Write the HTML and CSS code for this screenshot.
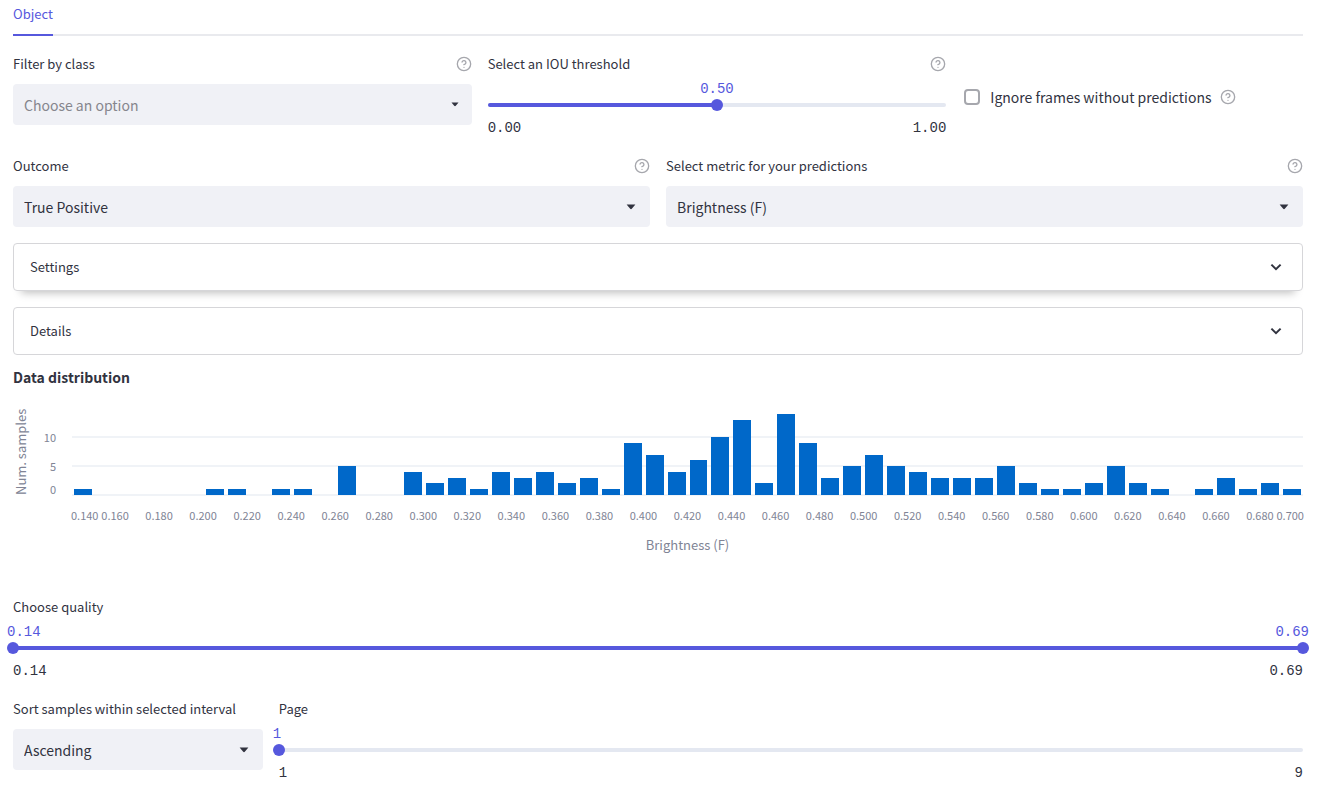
FILE: index.html
```
<!DOCTYPE html>
<html lang="en">
<head>
<meta charset="utf-8">
<meta name="viewport" content="width=device-width, initial-scale=1">
<title>Predictions explorer</title>
<link rel="stylesheet" href="styles.css">
</head>
<body>
<svg class="sprite" aria-hidden="true">
  <symbol id="help" viewBox="0 0 24 24"><circle cx="12" cy="12" r="10"/><path d="M9.09 9a3 3 0 0 1 5.83 1c0 2-3 3-3 3M12 17h.01"/></symbol>
  <symbol id="caret" viewBox="0 0 10 6"><path d="M.6.6h8.8L6 4.6Q5 5.8 4 4.6z"/></symbol>
  <symbol id="chevron" viewBox="0 0 12 8"><path d="M1.4 1.6 6 6.200l4.600-4.600"/></symbol>
</svg>
<main class="page">
  <nav class="tabs" role="tablist"><button class="tab" role="tab" aria-selected="true">Object</button></nav>

  <div class="row row-filters">
    <div class="field">
      <div class="field-head"><label for="classes">Filter by class</label><button class="help" aria-label="Help"><svg><use href="#help"/></svg></button></div>
      <div class="select"><select id="classes" class="placeholder"><option>Choose an option</option></select><svg class="caret caret-small"><use href="#caret"/></svg></div>
    </div>
    <div class="field">
      <div class="field-head"><label for="iou">Select an IOU threshold</label><button class="help" aria-label="Help"><svg><use href="#help"/></svg></button></div>
      <div class="values middle"><output>0.50</output></div>
      <div class="slider"><div class="rail"><div class="fill" style="width:50%"></div></div><input id="iou" type="range" min="0" max="1" step="0.01" value="0.5"></div>
      <div class="limits"><span>0.00</span><span>1.00</span></div>
    </div>
    <div class="check">
      <input type="checkbox" id="ignore"><label for="ignore">Ignore frames without predictions</label><button class="help" aria-label="Help"><svg><use href="#help"/></svg></button>
    </div>
  </div>

  <div class="row row-half">
    <div class="field">
      <div class="field-head"><label for="outcome">Outcome</label><button class="help" aria-label="Help"><svg><use href="#help"/></svg></button></div>
      <div class="select"><select id="outcome"><option>True Positive</option></select><svg class="caret"><use href="#caret"/></svg></div>
    </div>
    <div class="field">
      <div class="field-head"><label for="metric">Select metric for your predictions</label><button class="help" aria-label="Help"><svg><use href="#help"/></svg></button></div>
      <div class="select"><select id="metric"><option>Brightness (F)</option></select><svg class="caret"><use href="#caret"/></svg></div>
    </div>
  </div>

  <details class="expander raised"><summary>Settings<svg class="chevron"><use href="#chevron"/></svg></summary></details>
  <details class="expander"><summary>Details<svg class="chevron"><use href="#chevron"/></svg></summary></details>

  <section class="distribution">
    <h2>Data distribution</h2>
    <div class="chart">
      <div class="y-title">Num. samples</div>
      <div class="y-ticks"><span>10</span><span>5</span><span>0</span></div>
      <div class="plot">
        <div class="gridlines"><i></i><i></i><i></i></div>
        <div class="bars" id="bars"></div>
      </div>
      <div class="x-ticks" id="ticks"></div>
      <div class="x-title">Brightness (F)</div>
    </div>
  </section>

  <div class="field">
    <div class="field-head"><label for="quality-min">Choose quality</label></div>
    <div class="values"><output>0.14</output><output>0.69</output></div>
    <div class="slider double"><div class="rail"><div class="fill" style="width:100%"></div></div><input id="quality-min" type="range" min="0.14" max="0.69" step="0.01" value="0.14"><input aria-label="Maximum quality" type="range" min="0.14" max="0.69" step="0.01" value="0.69"></div>
    <div class="limits"><span>0.14</span><span>0.69</span></div>
  </div>

  <div class="row row-sort">
    <div class="field">
      <div class="field-head"><label for="sort">Sort samples within selected interval</label></div>
      <div class="select"><select id="sort"><option>Ascending</option></select><svg class="caret"><use href="#caret"/></svg></div>
    </div>
    <div class="field">
      <div class="field-head"><label for="page">Page</label></div>
      <div class="values"><output>1</output></div>
      <div class="slider"><div class="rail"></div><input id="page" type="range" min="1" max="9" value="1"></div>
      <div class="limits"><span>1</span><span>9</span></div>
    </div>
  </div>
</main>
<script src="chart.js"></script>
</body>
</html>
```
FILE: styles.css
```
* { box-sizing: border-box; }

:root {
  --ink: #31333f;
  --accent: #5658dd;
  --muted: #808495;
  --surface: #f0f1f6;
}

body {
  margin: 0;
  background: #fff;
  color: var(--ink);
  font: 13px/20px "Noto Sans CJK SC", "Noto Sans", sans-serif;
}

button, input, select { font: inherit; color: inherit; }
.sprite { display: none; }

.page {
  display: flex;
  flex-direction: column;
  gap: 16px;
  padding: 4px 19px 8px 13px;
}

.tabs {
  display: flex;
  height: 32px;
  margin-bottom: 2px;
  border-bottom: 2px solid #e9eaee;
}
.tab {
  height: 32px;
  padding: 0 0 10px;
  border: 0;
  border-bottom: 2px solid var(--accent);
  background: none;
  color: var(--accent);
}

.row { display: grid; gap: 16px; }
.row-filters { grid-template-columns: 35fr 35fr 26fr; }
.row-half { grid-template-columns: 1fr 1fr; }
.row-sort { grid-template-columns: 10fr 41fr; }

.field { min-width: 0; }
.field-head {
  display: flex;
  justify-content: space-between;
  align-items: center;
  height: 20px;
}

.help {
  display: flex;
  padding: 0;
  border: 0;
  background: none;
}
.help svg {
  width: 16px;
  height: 16px;
  fill: none;
  stroke: #a6a7ad;
  stroke-width: 2;
  stroke-linecap: round;
  stroke-linejoin: round;
}

.select {
  display: grid;
  align-items: center;
  margin-top: 10px;
}
.select > * { grid-area: 1 / 1; }
.select select {
  appearance: none;
  width: 100%;
  height: 41px;
  padding: 0 32px 0 11px;
  border: 0;
  border-radius: 4px;
  background: var(--surface);
  font-size: 14px;
}
.select .placeholder { color: #85868d; }
.caret {
  width: 10px;
  height: 6px;
  margin-right: 14px;
  justify-self: end;
  fill: var(--ink);
  pointer-events: none;
}
.caret-small { width: 8px; height: 5px; margin-right: 13px; }

.values, .limits {
  display: flex;
  justify-content: space-between;
  font: 14px/20px "Liberation Mono", monospace;
}
.values {
  margin: 6px -6px 0;
  color: var(--accent);
  line-height: 18px;
}
.values.middle { justify-content: center; }
.limits { padding: 7px 0 2px; }

.slider {
  display: grid;
  align-items: center;
  height: 13px;
}
.slider > * { grid-area: 1 / 1; }
.rail {
  height: 4px;
  border-radius: 2px;
  background: #e4e8f1;
}
.fill {
  height: 100%;
  border-radius: 2px;
  background: var(--accent);
}
.slider input {
  appearance: none;
  width: auto;
  height: 12px;
  margin: 0 -6px;
  background: none;
}
.slider input::-webkit-slider-thumb {
  appearance: none;
  width: 12px;
  height: 12px;
  border-radius: 50%;
  background: var(--accent);
  pointer-events: auto;
}
.double input { pointer-events: none; }

.check {
  display: flex;
  align-items: center;
  height: 20px;
  margin: 33px 0 0 2px;
  font-size: 14px;
}
.check input {
  appearance: none;
  width: 16px;
  height: 16px;
  margin: 0 10px 0 0;
  border: 2px solid #a6a7ad;
  border-radius: 4px;
}
.check .help { margin-left: 8px; }

.expander {
  border: 1px solid #d6d6d9;
  border-radius: 4px;
}
.raised { box-shadow: 0 10px 8px -8px rgba(0, 0, 0, .25); }
.expander summary {
  display: flex;
  justify-content: space-between;
  align-items: center;
  height: 46px;
  padding: 0 20px 0 16px;
  list-style: none;
  cursor: pointer;
}
.chevron {
  width: 12px;
  height: 8px;
  fill: none;
  stroke: var(--ink);
  stroke-width: 2;
}

.distribution { margin: -4px 0 26px; }
h2 {
  margin: 0 0 26px;
  font-size: 14px;
  line-height: 21px;
}

/* columns: axis title, tick labels, plot */
.chart {
  display: grid;
  grid-template-columns: 16px 27px 1fr;
  column-gap: 8px;
  color: var(--muted);
  font-size: 11px;
  line-height: 16px;
}
.y-title {
  justify-self: center;
  align-self: center;
  writing-mode: vertical-rl;
  transform: rotate(180deg);
  font-size: 13px;
  height: 81px;
  white-space: nowrap;
}
.y-ticks, .gridlines {
  display: grid;
  grid-template-rows: 4fr 5fr 5fr;
  height: 81px;
}
.y-ticks span {
  align-self: end;
  margin-bottom: -8px;
}
.y-ticks { text-align: right; padding-right: 8px; }
.y-ticks span:last-child { margin-bottom: -2px; }
.plot { display: grid; height: 81px; }
.plot > * { grid-area: 1 / 1; }
.gridlines i { border-bottom: 2px solid #f0f3f7; margin-bottom: -1px; }
.bars {
  display: grid;
  grid-template-columns: repeat(56, 1fr);
  align-items: end;
  z-index: 1;
}
.bars span {
  margin: 0 2px;
  background: #0068c9;
}
.x-ticks {
  grid-column: 3;
  display: grid;
  grid-template-columns: 1fr repeat(27, 2fr) 1fr;
  margin: 12px -1px 0;
}
.x-ticks span {
  display: flex;
  justify-content: center;
  min-width: 0;
}
.x-ticks span:first-child { justify-content: flex-start; }
.x-ticks span:last-child { justify-content: flex-end; }
.x-title {
  grid-column: 3;
  margin-top: 12px;
  text-align: center;
  font-size: 13px;
  line-height: 20px;
}
```
FILE: chart.js
```
// Sample counts per 0.01-wide brightness bin, starting at 0.14
const counts = [
  1, 0, 0, 0, 0, 0, 1, 1, 0, 1, 1, 0, 5, 0, 0, 4, 2, 3, 1, 4, 3, 4, 2, 3, 1, 9, 7, 4,
  6, 10, 13, 2, 14, 9, 3, 5, 7, 5, 4, 3, 3, 3, 5, 2, 1, 1, 2, 5, 2, 1, 0, 1, 3, 1, 2, 1
];
const bars = document.getElementById("bars");
for (const n of counts) {
  const bar = document.createElement("span");
  bar.style.height = (n / 14) * 100 + "%";
  bars.append(bar);
}
const ticks = document.getElementById("ticks");
for (let i = 0; i <= 28; i++) {
  const tick = document.createElement("span");
  tick.textContent = (0.14 + i * 0.02).toFixed(3);
  ticks.append(tick);
}
```
